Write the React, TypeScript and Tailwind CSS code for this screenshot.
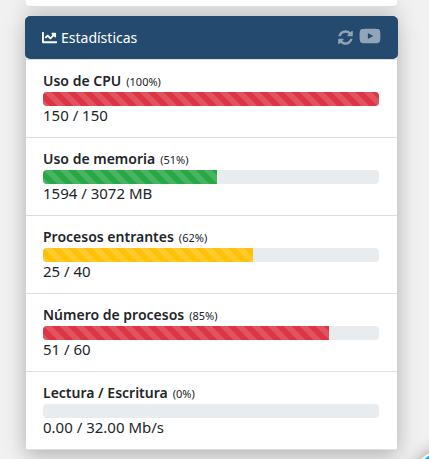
import { FaChartLine, FaYoutube } from "react-icons/fa";

type Stat = { label: string; percent: number; barWidth: number; value: string; color: string };

const stats: Stat[] = [
  { label: "Uso de CPU", percent: 100, barWidth: 100, value: "150 / 150", color: "bg-[#dc3545]" },
  { label: "Uso de memoria", percent: 51, barWidth: 51.8, value: "1594 / 3072 MB", color: "bg-[#28a745]" },
  { label: "Procesos entrantes", percent: 62, barWidth: 62.5, value: "25 / 40", color: "bg-[#ffc107]" },
  { label: "Número de procesos", percent: 85, barWidth: 85, value: "51 / 60", color: "bg-[#dc3545]" },
  { label: "Lectura / Escritura", percent: 0, barWidth: 0, value: "0.00 / 32.00 Mb/s", color: "bg-[#28a745]" },
];

const cardShadow =
  "relative before:absolute before:inset-0 before:-z-10 before:shadow-[0_5px_20px_rgba(0,0,0,0.28)]";

function RefreshIcon() {
  return (
    <svg viewBox="0 0 1792 1792" fill="currentColor" className="size-[17px]" aria-hidden="true">
      <path d="M1639 1056q0 5-1 7-64 268-268 434.500t-478 166.500q-146 0-282.500-55t-243.500-157l-129 129q-19 19-45 19t-45-19-19-45v-448q0-26 19-45t45-19h448q26 0 45 19t19 45-19 45l-137 137q71 66 161 102t187 36q134 0 250-65t186-179q11-17 53-117 8-23 30-23h192q13 0 22.500 9.500t9.500 22.500zm25-800v448q0 26-19 45t-45 19h-448q-26 0-45-19t-19-45 19-45l138-138q-148-137-349-137-134 0-250 65t-186 179q-11 17-53 117-8 23-30 23h-199q-13 0-22.500-9.500t-9.500-22.500v-7q65-268 270-434.500t480-166.500q146 0 284 55.500t245 156.500l130-129q19-19 45-19t45 19 19 45z" />
    </svg>
  );
}

function StatRow({ stat }: { stat: Stat }) {
  return (
    <li className="h-[78px] border-t border-[#dcdddf] pt-[11px] pr-[18px] pl-[17px]">
      <div className="flex h-[21px] items-baseline gap-[5px] leading-5">
        <strong className="font-semibold">{stat.label}</strong>
        <small className="text-[11px]">({stat.percent}%)</small>
      </div>
      <div
        role="progressbar"
        aria-label={stat.label}
        aria-valuenow={stat.percent}
        aria-valuemin={0}
        aria-valuemax={100}
        className="h-[14px] overflow-hidden rounded bg-[#e9ecef]"
      >
        <div
          className={`h-full bg-[linear-gradient(45deg,rgba(255,255,255,0.15)_25%,transparent_25%,transparent_50%,rgba(255,255,255,0.15)_50%,rgba(255,255,255,0.15)_75%,transparent_75%,transparent)] bg-[length:16px_16px] ${stat.color}`}
          style={{ width: `${stat.barWidth}%` }}
        />
      </div>
      <div className="text-[15px] leading-[18px]">{stat.value}</div>
    </li>
  );
}

export default function App() {
  return (
    <main className="relative isolate h-screen overflow-hidden bg-[#f1f1f1] pr-8 pl-[26px] font-['Noto_Sans',sans-serif] text-sm text-[#212529]">
      <div className={`h-[7px] rounded-b border-b border-[#dfdfdf] bg-white ${cardShadow}`} />
      <section className={`mt-[9px] rounded-b bg-white ${cardShadow}`}>
        <header className="-mx-px flex h-[43px] items-center rounded-[5px] bg-[#254a70] px-[17px] text-white">
          <FaChartLine className="mr-1 size-[15px]" aria-hidden="true" />
          <h2>Estadísticas</h2>
          <div className="ml-auto flex items-center gap-[5px] text-white/50">
            <button type="button" aria-label="Actualizar">
              <RefreshIcon />
            </button>
            <button type="button" aria-label="Ver vídeo" className="pb-[3px]">
              <FaYoutube className="size-[22px]" />
            </button>
          </div>
        </header>
        <ul className="border-b border-[#dfdfdf]">
          {stats.map((stat) => (
            <StatRow key={stat.label} stat={stat} />
          ))}
        </ul>
      </section>
      <div className="absolute -right-[44px] -bottom-[51px] size-[60px] rounded-full border-2 border-white bg-[#1ca7e4] shadow-[0_0_16px_rgba(0,0,0,0.4)]" />
    </main>
  );
}
